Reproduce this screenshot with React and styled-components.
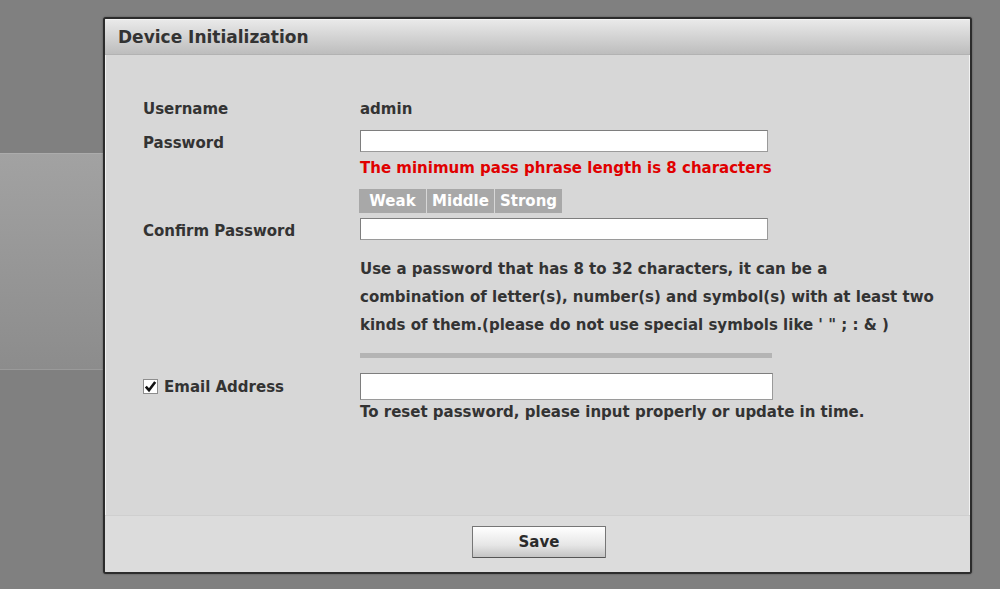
import styled, { createGlobalStyle } from "styled-components";

const GlobalStyle = createGlobalStyle`
  html, body {
    margin: 0;
    padding: 0;
    background: #808080;
  }
  body {
    font-family: "DejaVu Sans", Verdana, sans-serif;
    width: 1000px;
    height: 589px;
    overflow: hidden;
  }
`;

const Page = styled.div`
  position: relative;
  width: 1000px;
  height: 589px;
  padding-top: 153px;
  box-sizing: border-box;
`;

const SidePanel = styled.div`
  width: 200px;
  height: 215px;
  border-top: 1px solid #acacac;
  border-bottom: 1px solid #9a9a9a;
  background: linear-gradient(#a2a2a2, #8c8c8c);
`;

const Dialog = styled.div`
  position: absolute;
  left: 103px;
  top: 17px;
  width: 869px;
  height: 557px;
  box-sizing: border-box;
  border: 2px solid #2c2c2c;
  border-radius: 3px;
  background: #d7d7d7;
  box-shadow: inset 1px 1px 0 #f2f2f2, inset -1px 0 0 #f2f2f2, 0 0 2px rgba(0, 0, 0, 0.4);
  display: flex;
  flex-direction: column;
  overflow: hidden;
`;

const Header = styled.div`
  height: 34px;
  flex: none;
  display: flex;
  align-items: center;
  padding-left: 13px;
  background: linear-gradient(#e9e9e9, #bdbdbd);
  border-bottom: 1px solid #b2b2b2;
  border-top: 1px solid #f4f4f4;
  font-size: 17px;
  font-weight: bold;
  color: #333;
`;

const Body = styled.div`
  flex: 1;
  padding: 44px 0 0 38px;
  color: #333;
  font-size: 15px;
  font-weight: bold;
`;

const Row = styled.div`
  display: grid;
  grid-template-columns: 217px 600px;
  align-items: ${({ $align }) => $align || "start"};
  margin-top: ${({ $mt }) => $mt || 0}px;
  line-height: 20px;
`;

const Label = styled.div`
  display: flex;
  align-items: center;
  gap: 6px;
  padding-top: ${({ $pt }) => $pt || 0}px;
`;

const Input = styled.div`
  width: ${({ $w }) => $w}px;
  height: ${({ $h }) => $h}px;
  box-sizing: border-box;
  background: #fff;
  border: 1px solid #9a9a9a;
  border-top-color: #7e7e7e;
  border-left-color: #7e7e7e;
`;

const Warning = styled.div`
  color: #e00000;
`;

const Strength = styled.div`
  display: flex;
  gap: 1px;
  margin-left: -1px;
`;

const Level = styled.div`
  width: 67px;
  height: 24px;
  line-height: 24px;
  text-align: center;
  background: #a8a8a8;
  color: #fff;
  font-size: 15px;
`;

const Hint = styled.div`
  line-height: 28px;
`;

const Divider = styled.div`
  width: 412px;
  height: 5px;
  background: #b4b4b4;
`;

const Check = styled.span`
  width: 15px;
  height: 15px;
  box-sizing: border-box;
  background: #fff;
  border: 1px solid #8d8d8d;
  display: inline-flex;
  align-items: center;
  justify-content: center;
`;

const Footer = styled.div`
  height: 57px;
  flex: none;
  display: flex;
  justify-content: center;
  padding-top: 10px;
  box-sizing: border-box;
  background: #dcdcdc;
  border-top: 1px solid #cfcfcf;
`;

const Button = styled.button`
  width: 134px;
  height: 32px;
  margin-left: 3px;
  border: 1px solid #767676;
  border-bottom-color: #555;
  border-radius: 1px;
  background: linear-gradient(#ffffff, #e6e6e6 60%, #c4c4c4);
  font-family: "DejaVu Sans", Verdana, sans-serif;
  font-size: 15px;
  font-weight: bold;
  color: #2a2a2a;
  cursor: pointer;
`;

const App = () => {
  return (
    <Page>
      <GlobalStyle />
      <SidePanel />
      <Dialog>
        <Header>Device Initialization</Header>
        <Body>
          <Row>
            <Label>Username</Label>
            <div>admin</div>
          </Row>
          <Row $mt={11}>
            <Label $pt={3}>Password</Label>
            <Input $w={408} $h={22} />
          </Row>
          <Row $mt={5}>
            <div />
            <Warning>The minimum pass phrase length is 8 characters</Warning>
          </Row>
          <Row $mt={11}>
            <div />
            <Strength>
              <Level>Weak</Level>
              <Level>Middle</Level>
              <Level>Strong</Level>
            </Strength>
          </Row>
          <Row $mt={5}>
            <Label $pt={3}>Confirm Password</Label>
            <Input $w={408} $h={22} />
          </Row>
          <Row $mt={14}>
            <div />
            <Hint>
              Use a password that has 8 to 32 characters, it can be a
              <br />
              combination of letter(s), number(s) and symbol(s) with at least two
              <br />
              kinds of them.(please do not use special symbols like ' " ; : &amp; )
            </Hint>
          </Row>
          <Row $mt={14}>
            <div />
            <Divider />
          </Row>
          <Row $mt={15} $align="center">
            <Label>
              <Check>
                <svg width="13" height="13" viewBox="0 0 13 13">
                  <path d="M1.8 6.6 L5 10.2 L11.2 2" fill="none" stroke="#111" strokeWidth="2.6" />
                </svg>
              </Check>
              Email Address
            </Label>
            <Input $w={413} $h={27} />
          </Row>
          <Row $mt={2}>
            <div />
            <div>To reset password, please input properly or update in time.</div>
          </Row>
        </Body>
        <Footer>
          <Button>Save</Button>
        </Footer>
      </Dialog>
    </Page>
  );
};

export default App;
